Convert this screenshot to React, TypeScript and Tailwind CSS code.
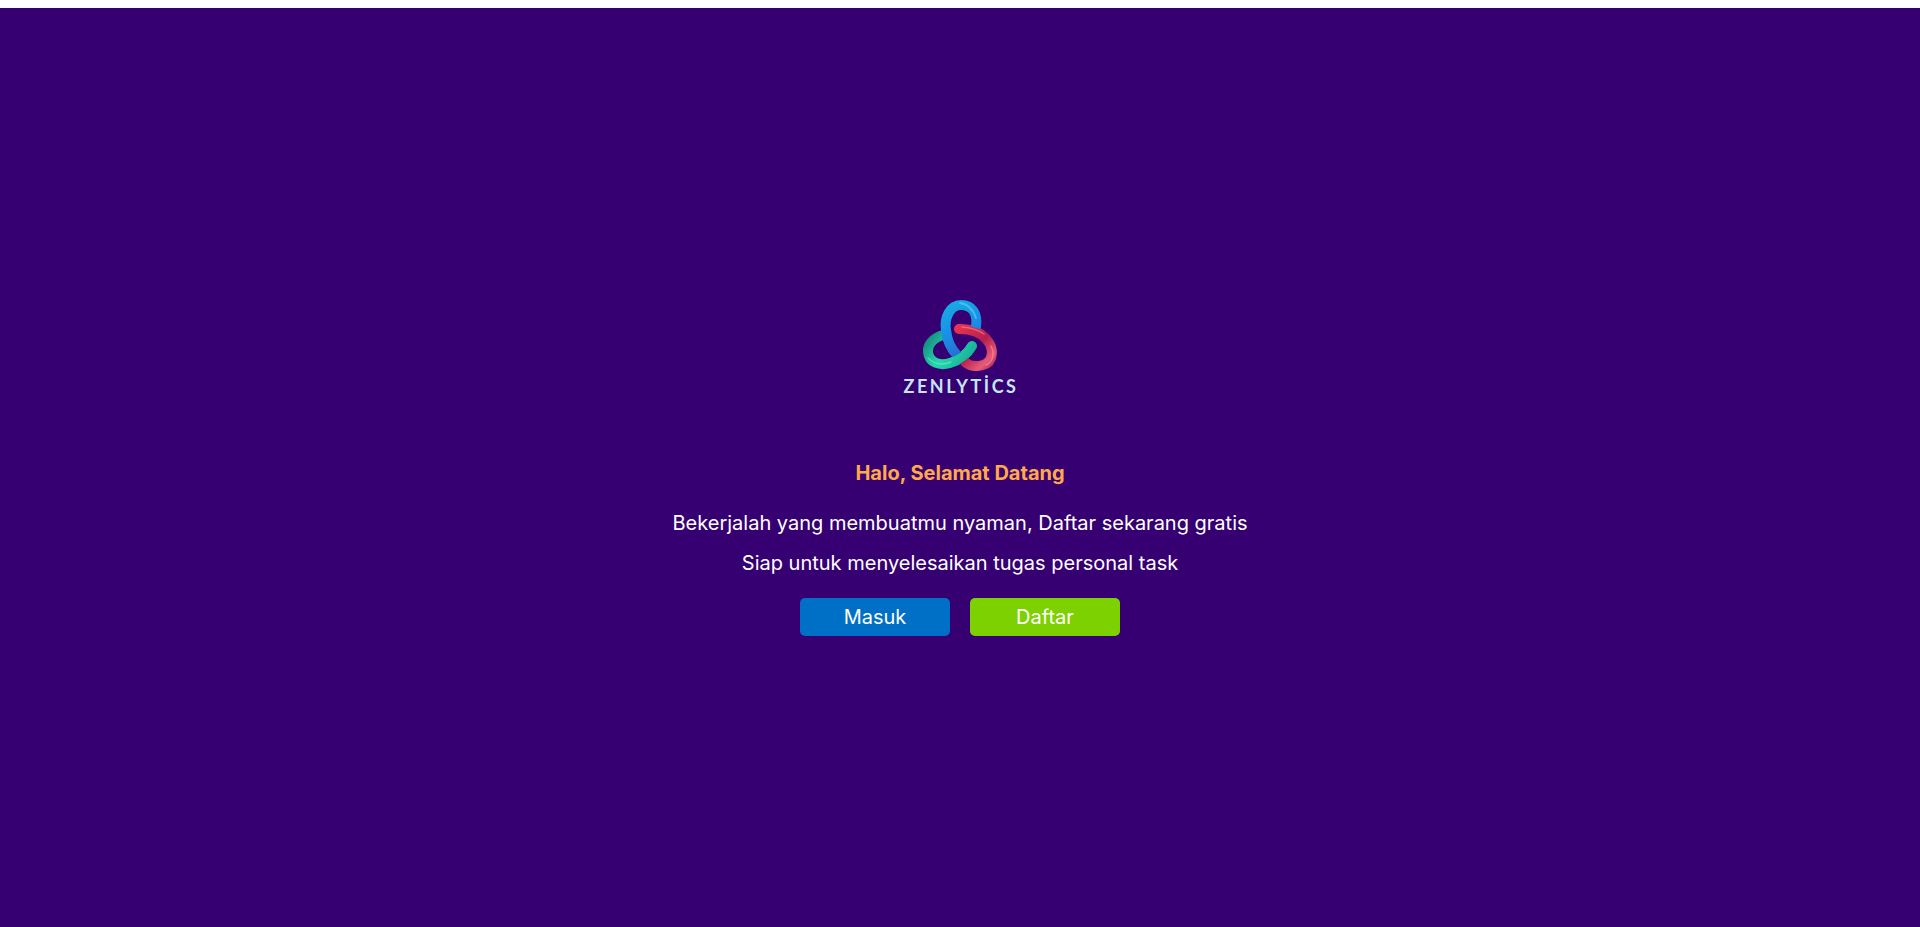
function Logo() {
  return (
    <div className="w-[160px] h-[130px] flex flex-col items-center">
      <svg width="160" height="95" viewBox="0 0 160 95" fill="none" className="blur-[0.4px]">
        <defs>
          <linearGradient id="blueRing" gradientUnits="userSpaceOnUse" x1="65" y1="20" x2="95" y2="76">
            <stop offset="0" stopColor="#16b0e4" />
            <stop offset="0.55" stopColor="#1a8ce6" />
            <stop offset="1" stopColor="#2a62c8" />
          </linearGradient>
          <linearGradient id="tealRing" gradientUnits="userSpaceOnUse" x1="45" y1="55" x2="92" y2="88">
            <stop offset="0" stopColor="#12807a" />
            <stop offset="0.45" stopColor="#26d8ae" />
            <stop offset="1" stopColor="#14a892" />
          </linearGradient>
          <linearGradient id="redRing" gradientUnits="userSpaceOnUse" x1="76" y1="48" x2="116" y2="88">
            <stop offset="0" stopColor="#e8344f" />
            <stop offset="0.5" stopColor="#b4204f" />
            <stop offset="0.8" stopColor="#e85a78" />
            <stop offset="1" stopColor="#a01c52" />
          </linearGradient>
        </defs>
        {/* teal + red go under the blue ring, then the crossings get redrawn on top */}
        <path d="M63 55 C53 58 47 65 48 72 C49 83 60 86 70 83 C80 80 88 73 92 66" stroke="url(#tealRing)" strokeWidth="10" strokeLinecap="round" />
        <path d="M79 49 C90 49 101 52 107 60 C114 68 114 82 103 85 C96 87 89 86 85 82" stroke="url(#redRing)" strokeWidth="10" strokeLinecap="round" />
        <path d="M96 47 C98 33 92 25 81 25 C70 25 64 38 66 50 C67 60 71 69 77 75" stroke="url(#blueRing)" strokeWidth="10" strokeLinecap="round" />
        <path d="M70 83 C80 80 88 73 92 66" stroke="url(#tealRing)" strokeWidth="9" strokeLinecap="round" />
        <path d="M79 49 C87 49 95 51 102 55" stroke="url(#redRing)" strokeWidth="8" strokeLinecap="round" />
        <path d="M96 38 C93 29 88 24 80 23" stroke="#5fd4f0" strokeWidth="2" strokeLinecap="round" opacity="0.6" />
        <path d="M82 47 C90 47.5 98 50 104 54" stroke="#f58a9c" strokeWidth="1.5" strokeLinecap="round" opacity="0.6" />
        <path d="M48 78 C55 85 64 85 71 82" stroke="#6af0cf" strokeWidth="1.5" strokeLinecap="round" opacity="0.6" />
        <path d="M111 66 C115 74 113 82 106 85" stroke="#f59ab0" strokeWidth="1.5" strokeLinecap="round" opacity="0.6" />
      </svg>
      <span className="pl-[2px] text-[18px] leading-[22px] font-bold tracking-[2.5px] text-[#c4e6f6] font-['Lato',sans-serif]">
        ZENLYTİCS
      </span>
    </div>
  );
}

function App() {
  return (
    <div className="h-screen pt-2 bg-white overflow-hidden">
      <div className="h-full bg-[#360072] flex flex-col items-center pt-[272px] text-white font-['Inter',sans-serif]">
        <Logo />
        <h1 className="mt-[51px] text-xl leading-6 font-bold text-[#ffa94d]">Halo, Selamat Datang</h1>
        <p className="mt-6 text-xl leading-7">Bekerjalah yang membuatmu nyaman, Daftar sekarang gratis</p>
        <p className="mt-3 text-xl leading-7">Siap untuk menyelesaikan tugas personal task</p>
        <div className="mt-[21px] flex gap-5">
          <button className="w-[150px] h-[38px] rounded-[5px] bg-[#0070c6] text-xl">Masuk</button>
          <button className="w-[150px] h-[38px] rounded-[5px] bg-[#7ed100] text-xl">Daftar</button>
        </div>
      </div>
    </div>
  );
}

export default App;
